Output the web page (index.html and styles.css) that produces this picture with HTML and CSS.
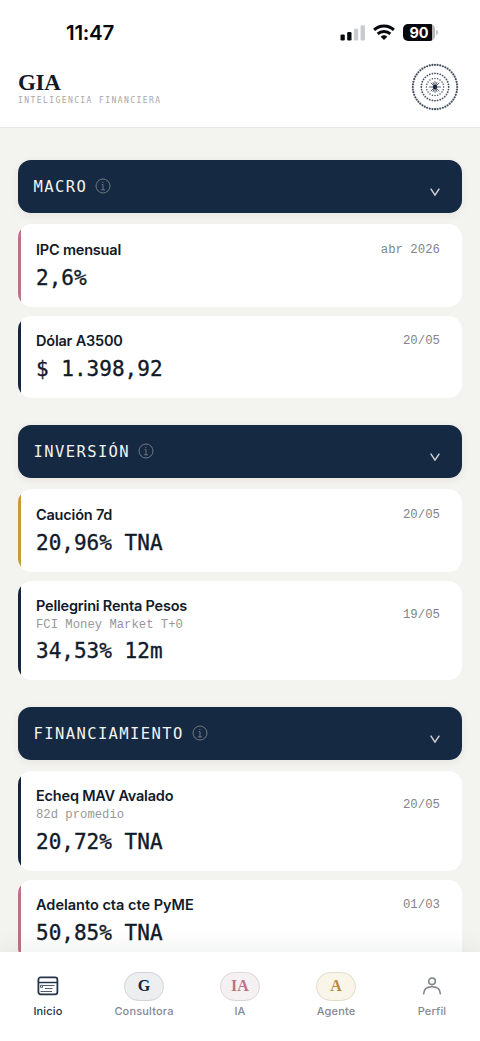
FILE: index.html
```html
<!DOCTYPE html>
<html lang="es">
<head>
<meta charset="utf-8">
<meta name="viewport" content="width=device-width, initial-scale=1">
<title>GIA</title>
<link rel="stylesheet" href="styles.css">
</head>
<body>
<div class="app">
  <div class="status">
    <span class="clock">11:47</span>
    <div class="status-icons">
      <svg width="26" height="18" viewBox="0 0 26 18"><rect x="0.5" y="10.5" width="4.3" height="6" rx="1.3" fill="#05080d"/><rect x="7.2" y="8" width="4.3" height="8.5" rx="1.3" fill="#05080d"/><rect x="13.9" y="4.7" width="4.3" height="11.8" rx="1.3" fill="#c9cace"/><rect x="20.6" y="1.2" width="4.3" height="15.3" rx="1.3" fill="#c9cace"/></svg>
      <svg class="wifi" width="22" height="16" viewBox="0 0 22 16"><g fill="none" stroke="#05080d" stroke-width="2.9"><path d="M1.1 5.9C6.6 .6 15.4 .6 20.9 5.9"/><path d="M4.7 9.9c3.5-3.3 9.1-3.3 12.6 0"/></g><path d="M7.7 12.7c1.9-1.8 4.7-1.8 6.6 0L11 16Z" fill="#05080d"/></svg>
      <div class="battery"><span class="battery-body">90</span><span class="battery-tip"></span></div>
    </div>
  </div>
  <header class="top">
    <div class="brand">
      <div class="brand-name">GIA</div>
      <div class="brand-sub">INTELIGENCIA FINANCIERA</div>
    </div>
    <svg class="emblem" width="50" height="50" viewBox="0 0 50 50" fill="none" stroke="#465060" stroke-linecap="round">
      <circle cx="25" cy="25" r="22.2" stroke-width="2.2" pathLength="156" stroke-dasharray="0 3"/>
      <circle cx="25" cy="25" r="13.7" stroke-width="1.8" pathLength="96" stroke-dasharray="0 3"/>
      <circle cx="25" cy="25" r="8.6" stroke-width="1.5" pathLength="60" stroke-dasharray="0 3"/>
      <path stroke-width=".9" d="M25 19.5v11M19.5 25h11M21 21l8 8M29 21l-8 8M23 20.5l4 9M27 20.5l-4 9"/>
      <circle cx="25" cy="25" r="2.2" fill="#152943" stroke="none"/>
    </svg>
  </header>
  <main class="content">
    <section class="group">
      <div class="bar"><h2 class="bar-title">MACRO</h2><svg class="info" viewBox="0 0 16 16"><circle cx="8" cy="8" r="7"/><path d="M6.7 6.6H8v5.2M6.2 11.8h3.7M7.9 3.9v1.2"/></svg><svg class="chevron" viewBox="0 0 10 8"><path d="M.7.7 5 7.1 9.3.7"/></svg></div>
      <article class="card pink"><div class="name">IPC mensual</div><div class="date">abr 2026</div><div class="value">2,6%</div></article>
      <article class="card navy"><div class="name">Dólar A3500</div><div class="date">20/05</div><div class="value">$ 1.398,92</div></article>
    </section>
    <section class="group">
      <div class="bar"><h2 class="bar-title">INVERSIÓN</h2><svg class="info" viewBox="0 0 16 16"><circle cx="8" cy="8" r="7"/><path d="M6.7 6.6H8v5.2M6.2 11.8h3.7M7.9 3.9v1.2"/></svg><svg class="chevron" viewBox="0 0 10 8"><path d="M.7.7 5 7.1 9.3.7"/></svg></div>
      <article class="card gold"><div class="name">Caución 7d</div><div class="date">20/05</div><div class="value">20,96% TNA</div></article>
      <article class="card navy tall"><div class="name">Pellegrini Renta Pesos<div class="note">FCI Money Market T+0</div></div><div class="date">19/05</div><div class="value">34,53% 12m</div></article>
    </section>
    <section class="group">
      <div class="bar"><h2 class="bar-title">FINANCIAMIENTO</h2><svg class="info" viewBox="0 0 16 16"><circle cx="8" cy="8" r="7"/><path d="M6.7 6.6H8v5.2M6.2 11.8h3.7M7.9 3.9v1.2"/></svg><svg class="chevron" viewBox="0 0 10 8"><path d="M.7.7 5 7.1 9.3.7"/></svg></div>
      <article class="card navy tall"><div class="name">Echeq MAV Avalado<div class="note">82d promedio</div></div><div class="date">20/05</div><div class="value">20,72% TNA</div></article>
      <article class="card pink"><div class="name wide">Adelanto cta cte PyME</div><div class="date">01/03</div><div class="value">50,85% TNA</div></article>
    </section>
  </main>
  <nav class="tabs">
    <a class="tab active"><span class="tab-icon"><svg width="22" height="20" viewBox="0 0 22 20" fill="none" stroke="#26354a"><rect x="1.4" y="1.4" width="19" height="17" rx="2.3" stroke-width="1.8"/><path stroke-width="1.5" d="M1.4 6.5h19"/><path stroke-width=".8" d="M3.5 9.3h2v2h-2zM6 9.5h11.5M8 12.5h7.5M3.5 15.5h11.5"/></svg></span>Inicio</a>
    <a class="tab"><span class="tab-icon"><span class="pill pill-g">G</span></span>Consultora</a>
    <a class="tab"><span class="tab-icon"><span class="pill pill-ia">IA</span></span>IA</a>
    <a class="tab"><span class="tab-icon"><span class="pill pill-a">A</span></span>Agente</a>
    <a class="tab"><span class="tab-icon"><svg width="20" height="20" viewBox="0 0 20 20" fill="none" stroke="#7d818a" stroke-width="1.6" stroke-linecap="round"><circle cx="10" cy="5.3" r="3.3"/><path d="M1.7 17.8c0-4.4 3.1-7.1 8.3-7.1s8.3 2.7 8.3 7.1"/></svg></span>Perfil</a>
  </nav>
</div>
</body>
</html>
```
FILE: styles.css
```css
* { box-sizing: border-box; }
body { margin: 0; background: #f3f3ef; color: #111a28; font-family: Inter, sans-serif; }
.app { height: 1041px; display: flex; flex-direction: column; overflow: hidden; }

.status { flex: none; height: 60px; padding: 21px 42px 0 66px; display: flex; justify-content: space-between; background: #fff; }
.clock { font: 600 20.5px/24px Inter, sans-serif; letter-spacing: -.25px; color: #05080d; }
.status-icons { display: flex; align-items: flex-start; padding-top: 3px; }
.wifi { margin: 0 8px 0 7px; }
.battery { display: flex; align-items: center; gap: 1px; }
.battery-body { width: 32px; height: 17px; border-radius: 5px; background: linear-gradient(to right, #05080d 29px, #b8b4ba 29px); color: #fff; text-align: center; font: 700 14.5px/17px Inter, sans-serif; }
.battery-tip { width: 2px; height: 5px; border-radius: 0 2px 2px 0; background: #c3c3c8; }

.top { flex: none; height: 68px; padding: 2px 20px 0 18px; display: flex; justify-content: space-between; background: #fff; border-bottom: 1px solid #e7e7e5; }
.brand-name { margin-top: 8px; font: 700 23px/25px "Liberation Serif", serif; letter-spacing: -.3px; }
.brand-sub { font: 8px/12px "DejaVu Sans Mono", monospace; letter-spacing: 1.42px; color: #aaa5a9; }

.content { flex: 1; min-height: 0; overflow: hidden; padding: 32px 18px 0; }
.group { display: flex; flex-direction: column; gap: 9px; margin-bottom: 27px; }
.bar { flex: none; height: 53px; margin-bottom: 2px; padding: 0 22px 0 15.5px; display: flex; align-items: center; border-radius: 13px; background: #152943; box-shadow: 0 2px 8px rgba(70, 35, 35, .07); }
.bar-title { margin: 0; font: 400 15.5px/20px "DejaVu Sans Mono", monospace; letter-spacing: 1.4px; color: #f4f3ed; }
.info { width: 16px; height: 16px; margin: -1px 0 0 8px; fill: none; stroke: #7c8087; stroke-width: .9; }
.chevron { width: 10px; height: 8px; margin: 11px 0 0 auto; fill: none; stroke: #d1cfcd; stroke-width: 1.5; }

.card { position: relative; flex: none; height: 82.5px; padding: 14.5px 22px 0 18px; display: grid; grid-template-columns: 1fr auto; grid-template-rows: 22px 34px; align-items: center; border-radius: 14px; background: #fff; overflow: hidden; }
.card::before { content: ""; position: absolute; inset: 0 auto 0 0; width: 3.3px; background: var(--accent); }
.tall { height: 99.5px; grid-template-rows: 39px 34px; }
.pink { --accent: #bd728b; }
.navy { --accent: #14263e; }
.gold { --accent: #c69a36; }
.name { font: 600 14.5px/20px Inter, sans-serif; letter-spacing: -.2px; white-space: nowrap; }
.wide { letter-spacing: 0; }
.note { font: 400 12.2px/18px "Liberation Mono", monospace; letter-spacing: .03px; color: #94979c; }
.date { font: 12.3px/18px "Liberation Mono", monospace; letter-spacing: .03px; color: #81848c; }
.value { grid-column: 1 / -1; font: 400 21px/30px "DejaVu Sans Mono", monospace; letter-spacing: .01px; color: #111a28; -webkit-text-stroke: .35px #111a28; }

.tabs { position: relative; flex: none; height: 89px; padding-top: 18px; display: grid; grid-template-columns: repeat(5, 1fr); background: #fff; box-shadow: 0 -3px 24px rgba(20, 25, 35, .07); }
.tab { display: flex; flex-direction: column; align-items: center; gap: 1px; font: 500 11px/16px Inter, sans-serif; letter-spacing: .17px; color: #858891; }
.active { color: #26354a; }
.tab-icon { height: 32px; display: flex; align-items: center; }
.pill { width: 40px; height: 29px; border-radius: 15px; border: 1px solid; display: flex; justify-content: center; font: 700 16px/26px "Liberation Serif", serif; }
.pill-g { background: #edeef0; border-color: #d2d3d8; color: #152338; }
.pill-ia { background: #f5f0f2; border-color: #ddd5db; color: #bd728b; }
.pill-a { background: #f9f5e9; border-color: #e2dccb; color: #b98a43; }
```
